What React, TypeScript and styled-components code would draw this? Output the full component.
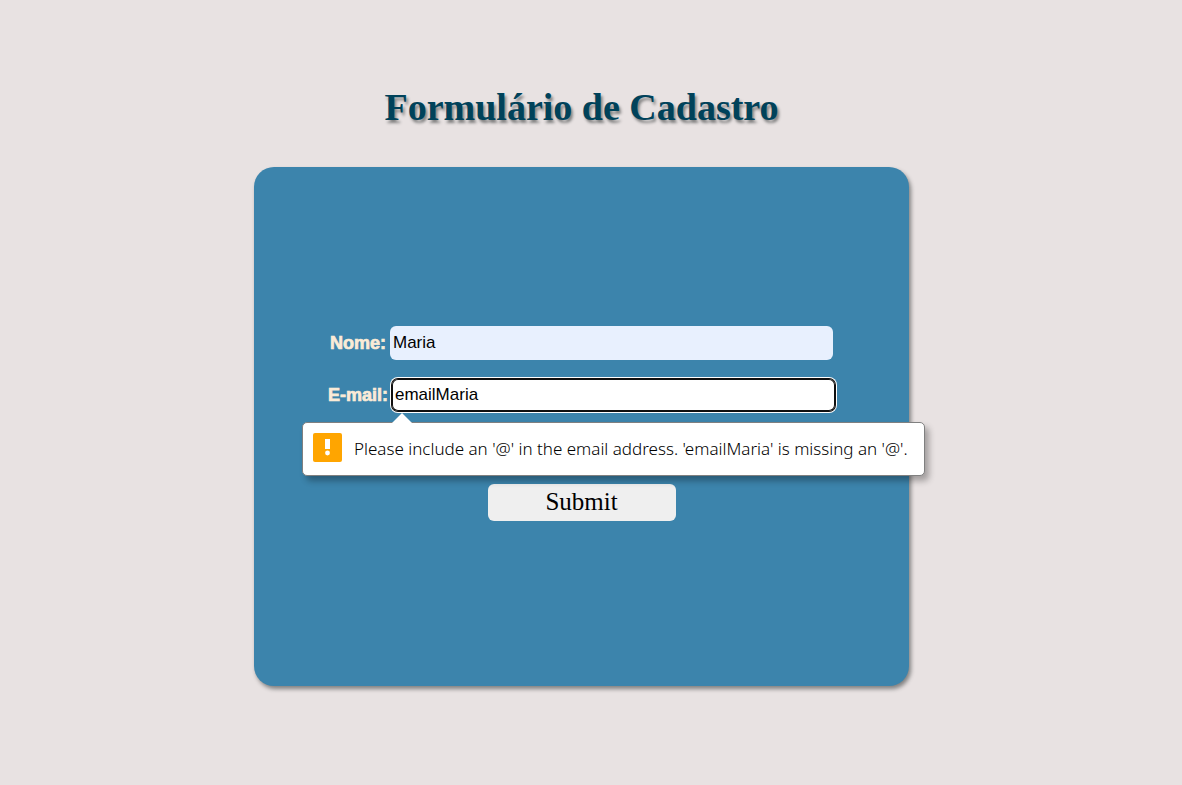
import React, { useState } from "react";
import styled, { createGlobalStyle } from "styled-components";

const GlobalStyle = createGlobalStyle`
  *, *::before, *::after { box-sizing: border-box; }
  body {
    margin: 0;
    background: #e8e2e2;
    font-family: "Liberation Serif", "Times New Roman", serif;
  }
`;

const Page = styled.main`
  min-height: 100vh;
  display: flex;
  flex-direction: column;
  align-items: center;
  padding: 84px 19px 40px 0;
`;

const Title = styled.h1`
  margin: 0 0 37px;
  font-size: 38px;
  line-height: 46px;
  font-weight: bold;
  color: #00425a;
  text-shadow: 2px 3px 3px gray;
`;

const Form = styled.form`
  width: 100%;
  max-width: 655px;
  display: flex;
  flex-direction: column;
  align-items: center;
  gap: 18px;
  padding: 159px 16px 165px;
  border-radius: 20px;
  background: #3c84ac;
  box-shadow: 2px 3px 4px gray;
`;

const Row = styled.div`
  width: 100%;
  display: flex;
  align-items: center;
  justify-content: center;
  gap: 4px;
  height: 34px;
`;

const Label = styled.label`
  font-family: "Liberation Sans", Arial, sans-serif;
  font-size: 18px;
  line-height: 20px;
  font-weight: bold;
  color: antiquewhite;
  -webkit-text-stroke: 0.7px antiquewhite;
`;

const Field = styled.div`
  position: relative;
  flex: 0 1 443px;
  display: flex;
`;

const Input = styled.input<{ $filled?: boolean; $invalid?: boolean }>`
  width: 100%;
  height: ${(p) => (p.$invalid ? 32 : 34)}px;
  margin: 0;
  padding: 0 3px;
  border: none;
  border-radius: 6px;
  outline: none;
  background: ${(p) => (p.$filled ? "#e8f0fe" : "#fff")};
  box-shadow: ${(p) =>
    p.$invalid
      ? "inset 0 0 0 1px #101010, 0 0 0 1px #101010, 0 0 0 2px #fff"
      : "none"};
  font-family: "Liberation Sans", Arial, sans-serif;
  font-size: 17px;
  color: #000;
`;

const Bubble = styled.div`
  position: absolute;
  z-index: 1;
  top: 43px;
  left: -90px;
  height: 54px;
  display: flex;
  align-items: center;
  gap: 12px;
  padding: 0 16px 0 10px;
  border: 1px solid #808080;
  border-radius: 5px;
  background: #fff;
  box-shadow: 4px 5px 6px rgba(0, 0, 0, 0.3);
  font-family: "Noto Sans", "Segoe UI", sans-serif;
  font-size: 17px;
  font-weight: 300;
  line-height: 24px;
  color: #000;
  white-space: nowrap;
`;

const Arrow = styled.svg`
  position: absolute;
  top: -10px;
  left: 88px;
`;

const Warning = styled.svg`
  flex: none;
  margin-bottom: 4px;
`;

const Submit = styled.button`
  width: 188px;
  height: 37px;
  margin: 54px 0 0;
  padding: 0 0 2px;
  border: none;
  border-radius: 6px;
  background: #efefef;
  font-family: inherit;
  font-size: 25px;
  line-height: 30px;
  color: #000;
`;

export default function App() {
  const [name, setName] = useState("Maria");
  const [email, setEmail] = useState("emailMaria");

  return (
    <>
      <GlobalStyle />
      <Page>
        <Title>Formulário de Cadastro</Title>
        <Form noValidate onSubmit={(e) => e.preventDefault()}>
          <Row>
            <Label htmlFor="nome">Nome:</Label>
            <Field>
              <Input
                id="nome"
                type="text"
                $filled
                value={name}
                onChange={(e) => setName(e.target.value)}
              />
            </Field>
          </Row>
          <Row>
            <Label htmlFor="email">E-mail:</Label>
            <Field>
              <Input
                id="email"
                type="email"
                $invalid
                aria-describedby="email-error"
                value={email}
                onChange={(e) => setEmail(e.target.value)}
              />
              <Bubble id="email-error" role="alert">
                <Arrow width="22" height="11" viewBox="0 0 22 11" aria-hidden="true">
                  <path d="M0 11 L1 10 L11 0 L21 10 L22 11 Z" fill="#fff" />
                </Arrow>
                <Warning width="29" height="29" viewBox="0 0 29 29" aria-hidden="true">
                  <rect width="29" height="29" rx="2" fill="#ffa500" />
                  <path d="M12 6h5v10h-5z" fill="#fff" />
                  <circle cx="14.5" cy="20" r="2.4" fill="#fff" />
                </Warning>
                <span>
                  Please include an '@' in the email address. 'emailMaria' is missing an '@'.
                </span>
              </Bubble>
            </Field>
          </Row>
          <Submit type="submit">Submit</Submit>
        </Form>
      </Page>
    </>
  );
}
